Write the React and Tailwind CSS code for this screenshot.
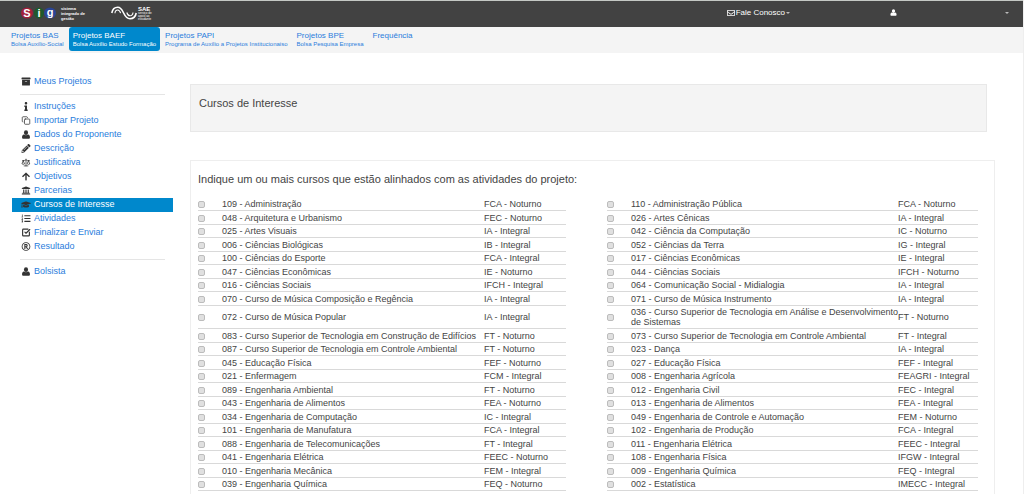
import { FaArchive, FaInfo, FaPencilAlt, FaArrowUp, FaUniversity, FaGraduationCap, FaListOl, FaRegRegistered, FaRegEnvelope } from 'react-icons/fa';
import { Copy, Scale, SquareCheckBig } from 'lucide-react';

function UserIcon({ className }) {
  return (
    <svg viewBox="0 0 16 16" className={className} fill="currentColor" aria-hidden="true">
      <ellipse cx="8" cy="4.8" rx="3.7" ry="4.3" />
      <path d="M1 13.2c0-3 .8-5.4 3.4-5.4 1 .9 2.200 1.400 3.600 1.400s2.600-.5 3.600-1.400c2.600 0 3.400 2.400 3.400 5.400 0 1.500-1 2.500-2.400 2.500H3.400C2 15.700 1 14.700 1 13.200z" />
    </svg>
  );
}

function CheckIcon({ className }) {
  return <SquareCheckBig className={className} strokeWidth={3} />;
}

const TABS = [
  { title: 'Projetos BAS', sub: 'Bolsa Auxílio-Social' },
  { title: 'Projetos BAEF', sub: 'Bolsa Auxílio Estudo Formação', active: true },
  { title: 'Projetos PAPI', sub: 'Programa de Auxílio a Projetos Institucionaiso' },
  { title: 'Projetos BPE', sub: 'Bolsa Pesquisa Empresa' },
  { title: 'Frequência' },
];

const MENU = [
  [{ label: 'Meus Projetos', icon: FaArchive }],
  [
    { label: 'Instruções', icon: FaInfo },
    { label: 'Importar Projeto', icon: Copy },
    { label: 'Dados do Proponente', icon: UserIcon },
    { label: 'Descrição', icon: FaPencilAlt },
    { label: 'Justificativa', icon: Scale },
    { label: 'Objetivos', icon: FaArrowUp },
    { label: 'Parcerias', icon: FaUniversity },
    { label: 'Cursos de Interesse', icon: FaGraduationCap, active: true },
    { label: 'Atividades', icon: FaListOl },
    { label: 'Finalizar e Enviar', icon: CheckIcon },
    { label: 'Resultado', icon: FaRegRegistered },
  ],
  [{ label: 'Bolsista', icon: UserIcon }],
];

const ROWS = [
  ['109 - Administração', 'FCA - Noturno', '110 - Administração Pública', 'FCA - Noturno'],
  ['048 - Arquitetura e Urbanismo', 'FEC - Noturno', '026 - Artes Cênicas', 'IA - Integral'],
  ['025 - Artes Visuais', 'IA - Integral', '042 - Ciência da Computação', 'IC - Noturno'],
  ['006 - Ciências Biológicas', 'IB - Integral', '052 - Ciências da Terra', 'IG - Integral'],
  ['100 - Ciências do Esporte', 'FCA - Integral', '017 - Ciências Econômicas', 'IE - Integral'],
  ['047 - Ciências Econômicas', 'IE - Noturno', '044 - Ciências Sociais', 'IFCH - Noturno'],
  ['016 - Ciências Sociais', 'IFCH - Integral', '064 - Comunicação Social - Midialogia', 'IA - Integral'],
  ['070 - Curso de Música Composição e Regência', 'IA - Integral', '071 - Curso de Música Instrumento', 'IA - Integral'],
  ['072 - Curso de Música Popular', 'IA - Integral', '036 - Curso Superior de Tecnologia em Análise e Desenvolvimento de Sistemas', 'FT - Noturno'],
  ['083 - Curso Superior de Tecnologia em Construção de Edifícios', 'FT - Noturno', '073 - Curso Superior de Tecnologia em Controle Ambiental', 'FT - Integral'],
  ['087 - Curso Superior de Tecnologia em Controle Ambiental', 'FT - Noturno', '023 - Dança', 'IA - Integral'],
  ['045 - Educação Física', 'FEF - Noturno', '027 - Educação Física', 'FEF - Integral'],
  ['021 - Enfermagem', 'FCM - Integral', '008 - Engenharia Agrícola', 'FEAGRI - Integral'],
  ['089 - Engenharia Ambiental', 'FT - Noturno', '012 - Engenharia Civil', 'FEC - Integral'],
  ['043 - Engenharia de Alimentos', 'FEA - Noturno', '013 - Engenharia de Alimentos', 'FEA - Integral'],
  ['034 - Engenharia de Computação', 'IC - Integral', '049 - Engenharia de Controle e Automação', 'FEM - Noturno'],
  ['101 - Engenharia de Manufatura', 'FCA - Integral', '102 - Engenharia de Produção', 'FCA - Integral'],
  ['088 - Engenharia de Telecomunicações', 'FT - Integral', '011 - Engenharia Elétrica', 'FEEC - Integral'],
  ['041 - Engenharia Elétrica', 'FEEC - Noturno', '108 - Engenharia Física', 'IFGW - Integral'],
  ['010 - Engenharia Mecânica', 'FEM - Integral', '009 - Engenharia Química', 'FEQ - Integral'],
  ['039 - Engenharia Química', 'FEQ - Noturno', '002 - Estatística', 'IMECC - Integral'],
  ['075 - Estudos Literários', 'IEL - Integral', '063 - Farmácia', 'FCM - Integral'],
];

function Logo() {
  return (
    <a href="#" className="flex items-center gap-1 text-white">
      <svg viewBox="0 0 36 14" className="h-[14px] w-[36px]" role="img" aria-label="sig">
        <ellipse cx="6" cy="7" rx="6" ry="5.5" fill="#a3203a" />
        <ellipse cx="18" cy="7" rx="5" ry="5.5" fill="#1f5a2c" />
        <ellipse cx="29" cy="7" rx="6" ry="5.5" fill="#2a4596" />
        <g fill="#fff" fontFamily="Liberation Sans, sans-serif" fontWeight="bold" fontSize="11" textAnchor="middle">
          <text x="6" y="11">S</text>
          <text x="18" y="11">i</text>
          <text x="29" y="10">g</text>
        </g>
      </svg>
      <span className="text-[4px] leading-[5px] font-bold">
        sistema<br />integrado de<br />gestão
      </span>
    </a>
  );
}

function SaeLogo() {
  return (
    <a href="#" className="flex items-center gap-px text-white">
      <svg viewBox="0 0 26 14" className="h-[14px] w-[26px]" fill="none" stroke="currentColor" aria-hidden="true">
        <path d="M.8 7C1.500 3 3.800 1.200 6.800 1.200c6.200 0 5.200 11.600 12.200 11.600 3 0 5.500-2 6.200-5.800" strokeWidth="1.600" />
        <path d="M4 7.200c0-2 1-3.200 2.700-3.200S9 5.200 9.600 7.200M15.800 6.500c.6 2.200 1.500 3.300 3.200 3.300s2.800-1.200 3-3.300" strokeWidth="1.100" />
      </svg>
      <span className="flex flex-col">
        <b className="text-[6px] leading-[6px]">SAE</b>
        <span className="text-[3px] leading-[3px]">serviço de<br />apoio ao<br />estudante</span>
      </span>
    </a>
  );
}

function Caret() {
  return <span className="h-0 w-0 border-x-2 border-t-2 border-x-transparent border-t-[#bbbbbb]" />;
}

function CourseCells({ name, unit }) {
  const id = `curso-${name.slice(0, 3)}`;
  return (
    <>
      <td className="border-b border-[#d9d9d9]">
        <input
          id={id}
          type="checkbox"
          className="mt-px block h-[7px] w-[7px] appearance-none rounded-[2px] border border-[#bcbcbc] bg-[#e0e0e0] checked:bg-[#0088cc]"
        />
      </td>
      <td className="border-b border-[#d9d9d9]">
        <label htmlFor={id} className="block py-px">{name}</label>
      </td>
      <td className="border-b border-[#d9d9d9] whitespace-nowrap">{unit}</td>
    </>
  );
}

export default function App() {
  return (
    <div className="h-screen overflow-x-hidden overflow-y-auto border-r border-[#eeeeee] bg-white font-['Liberation_Sans',Arial,sans-serif] text-[#444444] [scrollbar-width:none]">
      <header className="flex h-[27px] items-center border-t border-[#c4c8c4] bg-[#424242] pr-[14px] pb-[2px] pl-[21px] text-white">
        <Logo />
        <div className="ml-[26px]">
          <SaeLogo />
        </div>
        <div className="ml-auto flex items-center pb-px text-[8px]">
          <button type="button" className="flex items-center gap-px">
            <FaRegEnvelope className="h-2 w-2" />
            Fale Conosco
            <Caret />
          </button>
          <button type="button" aria-label="Usuário" className="ml-[100px] flex items-center gap-[108px]">
            <UserIcon className="h-[7px] w-[7px]" />
            <Caret />
          </button>
        </div>
      </header>

      <nav className="flex h-[26px] items-start gap-px bg-[#f4f4f4] pl-[7px] text-[#2a7ddc]">
        {TABS.map((tab) => (
          <a
            key={tab.title}
            href="#"
            className={`flex h-[24px] flex-col rounded-[3px] px-1 pt-1 whitespace-nowrap ${tab.active ? 'bg-[#0088cc] text-white' : ''}`}
          >
            <span className="text-[8px] leading-[10px]">{tab.title}</span>
            {tab.sub && <span className="text-[6px] leading-[6px]">{tab.sub}</span>}
          </a>
        ))}
      </nav>

      <div className="flex items-start">
        <aside className="ml-3 w-[161px] shrink-0 pt-[22px] text-[9px]">
          {MENU.map((group, i) => (
            <ul key={i}>
              {i > 0 && <li aria-hidden="true" className="mx-2 my-[5px] border-t border-[#e5e5e5]" />}
              {group.map(({ label, icon: Icon, active }) => (
                <li key={label}>
                  <a
                    href="#"
                    className={`flex h-[14px] items-center gap-[3px] pb-px pl-[9px] ${active ? 'bg-[#0088cc] text-white' : 'text-[#2a7ddc]'}`}
                  >
                    <Icon className="h-[9px] w-[10px] shrink-0 text-[#333333]" />
                    {label}
                  </a>
                </li>
              ))}
            </ul>
          ))}
        </aside>

        <main className="ml-[17px] min-w-0 flex-1 pt-[31px] pr-[28px]">
          <div className="mr-2 h-[48px] border border-[#e8e8e8] bg-[#f4f4f4] px-2 pt-[11px]">
            <h1 className="text-[11px] leading-[14px]">Cursos de Interesse</h1>
          </div>

          <section className="mt-[28px] border border-[#eeeeee] pt-[11px] pr-4 pl-[7px]">
            <h2 className="text-[11px] leading-[14px]">
              Indique um ou mais cursos que estão alinhados com as atividades do projeto:
            </h2>
            <table className="mt-3 w-full table-fixed border-separate border-spacing-0 text-[9px] leading-[10px]">
              <colgroup>
                <col className="w-6" />
                <col />
                <col className="w-[82px]" />
                <col className="w-[41px]" />
                <col className="w-6" />
                <col className="w-[267px]" />
                <col className="w-[80px]" />
              </colgroup>
              <tbody>
                {ROWS.map(([name, unit, name2, unit2]) => (
                  <tr key={name} className="odd:h-[13px] even:h-[14px]">
                    <CourseCells name={name} unit={unit} />
                    <td />
                    <CourseCells name={name2} unit={unit2} />
                  </tr>
                ))}
              </tbody>
            </table>
          </section>
        </main>
      </div>
    </div>
  );
}
